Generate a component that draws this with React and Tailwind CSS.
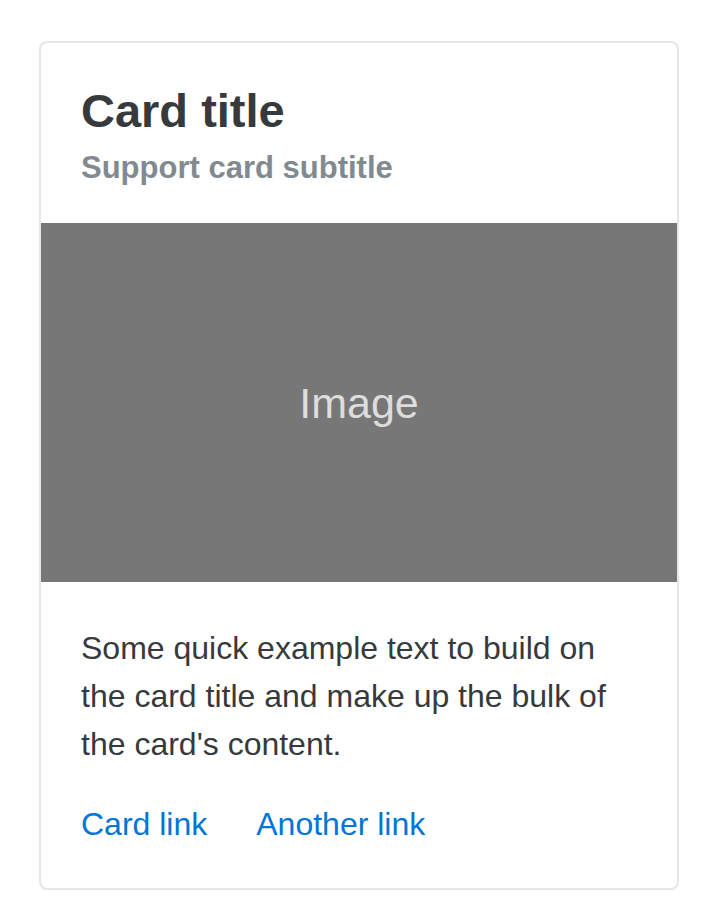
export default function App() {
  return (
    <div className="min-h-[922px] bg-white pt-[41px] pl-[39px]" style={{ fontFamily: '"Liberation Sans", Arial, sans-serif' }}>
      <div className="w-[640px] border-2 border-[#e6e6e6] rounded-[8px] overflow-hidden bg-white">
        <div className="px-[40px] pt-[42px] pb-[38px]">
          <h4 className="text-[47px] leading-[1.12] font-semibold text-[#373a3c] mb-[24px]">Card title</h4>
          <h6 className="text-[31px] leading-[1.1] font-semibold text-[#818a91] mt-[-11px]">Support card subtitle</h6>
        </div>
        <div className="h-[359px] bg-[#777777] flex items-center justify-center">
          <span className="text-[43px] leading-none text-[#dddddd] mt-[2px]">Image</span>
        </div>
        <div className="px-[40px] pt-[42px] pb-[40px]">
          <p className="text-[32px] leading-[48px] text-[#373a3c] mb-[32px]">
            Some quick example text to build on the card title and make up the bulk of the card's content.
          </p>
          <div className="text-[32px] leading-[48px]">
            <a href="#" className="text-[#0275d8]">Card link</a>
            <a href="#" className="text-[#0275d8] ml-[49px]">Another link</a>
          </div>
        </div>
      </div>
    </div>
  );
}
